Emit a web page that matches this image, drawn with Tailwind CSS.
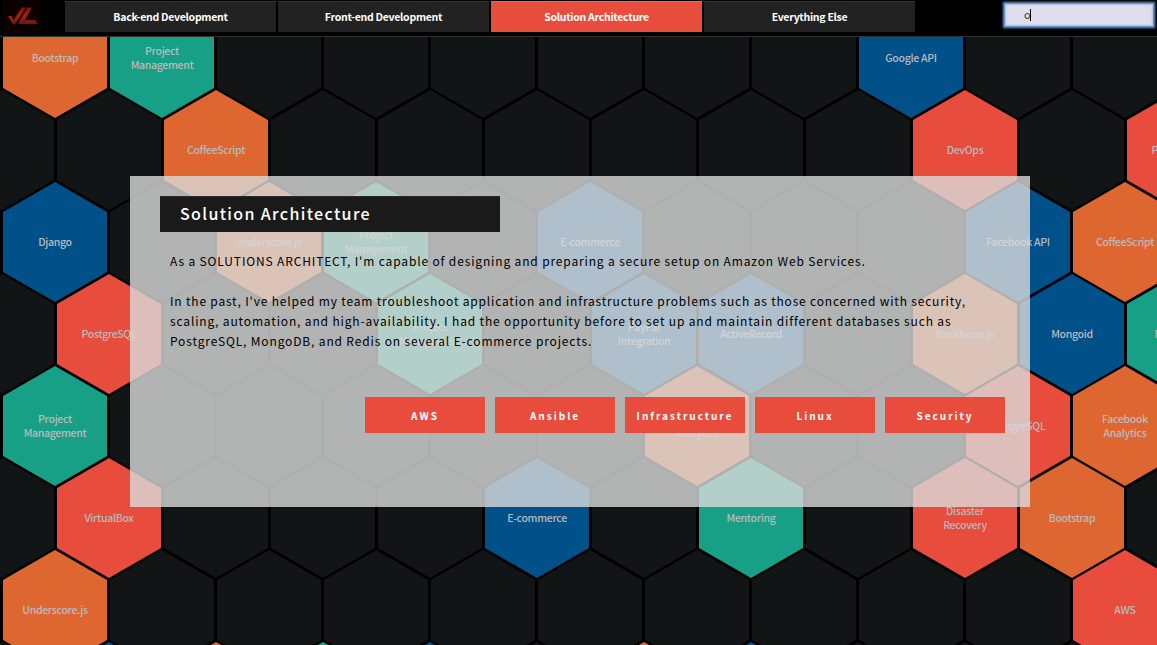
<!DOCTYPE html>
<html lang="en">
<head>
    <meta charset="UTF-8">
    <meta name="viewport" content="width=device-width, initial-scale=1.0">
    <title>Solution Architecture</title>
    <script src="https://cdn.jsdelivr.net/npm/@tailwindcss/browser@4"></script>
</head>
<body class="flex h-screen flex-col overflow-hidden bg-black font-['Noto_Sans_CJK_SC','Noto_Sans',sans-serif]">

    <!-- Top bar -->
    <header class="relative z-10 flex h-[37px] shrink-0 items-start border-b border-[#333] bg-black">
        <div class="ml-[3px] h-[34px] w-[62px]">
            <svg class="h-[34px] w-[38px]" viewBox="0 0 38 34">
                <defs>
                    <linearGradient id="logoRed" x1="0" y1="0" x2="0" y2="1">
                        <stop offset="0" stop-color="#7c1008"/>
                        <stop offset="0.5" stop-color="#b01c08"/>
                        <stop offset="1" stop-color="#651a10"/>
                    </linearGradient>
                </defs>
                <rect width="38" height="34" fill="#0b0101"/>
                <path fill="url(#logoRed)" d="M5 16h3.5l2.2 4L18.5 7.5H23L12.2 24H9.5z"/>
                <path fill="url(#logoRed)" d="M24.5 7.5H29L21.8 20h10.4l2.8 4H15z"/>
            </svg>
        </div>
        <nav class="mt-px flex gap-[2px] text-center text-[10.5px] leading-[30px] font-bold tracking-[-0.28px] text-white">
            <a class="h-[31px] w-[211px] border-t border-[#333] bg-[#222]">Back-end Development</a>
            <a class="h-[31px] w-[211px] border-t border-[#333] bg-[#222]">Front-end Development</a>
            <a class="h-[31px] w-[211px] border-t border-[#ee6b5e] bg-[#e84c3d]">Solution Architecture</a>
            <a class="h-[31px] w-[211px] border-t border-[#333] bg-[#222]">Everything Else</a>
        </nav>
        <div class="mt-[4px] mr-[4px] ml-auto flex h-[22px] w-[148px] items-center bg-[#dfdeec] pb-px pl-[19px] text-[11px] text-[#333] shadow-[0_0_2px_2px_#6a9bd8,inset_0_0_2px_1px_#a9c3e6]">
            <span class="tracking-[-0.7px]">o</span><span class="h-[12px] w-px bg-black"></span>
        </div>
    </header>

    <!-- Honeycomb, filled in by the script below -->
    <main id="comb" class="-mt-[39px] min-h-0 flex-1 overflow-hidden pl-[3px]"></main>

    <!-- Selected topic -->
    <section class="absolute top-[176px] left-[130px] h-[331px] w-[900px] bg-[#dbdbdb]/80 px-[30px] pt-[20px]">
        <h1 class="h-[36px] w-[340px] border-t border-[#2a2a2a] bg-[#1a1a1a] pl-[20px] text-[16px] leading-[33px] font-medium tracking-[1.35px] text-white">Solution Architecture</h1>
        <div class="mt-[19px] ml-[10px] text-[12px] leading-[20px] tracking-[0.85px] whitespace-nowrap text-black">
            <p>As a SOLUTIONS ARCHITECT, I'm capable of designing and preparing a secure setup on Amazon Web Services.</p>
            <p class="mt-[20px]"><span class="tracking-[0.81px]">In the past, I've helped my team troubleshoot application and infrastructure problems such as those concerned with security,</span><br>scaling, automation, and high-availability. I had the opportunity before to set up and maintain different databases such as<br>PostgreSQL, MongoDB, and Redis on several E-commerce projects.</p>
        </div>
        <div class="mt-[46px] -mr-[5px] flex justify-end gap-[10px] text-center text-[10px] leading-[37px] font-bold tracking-[2px] text-white">
            <a class="h-[36px] w-[120px] bg-[#e84c3d]">AWS</a>
            <a class="h-[36px] w-[120px] bg-[#e84c3d]">Ansible</a>
            <a class="h-[36px] w-[120px] bg-[#e84c3d]">Infrastructure</a>
            <a class="h-[36px] w-[120px] bg-[#e84c3d]">Linux</a>
            <a class="h-[36px] w-[120px] bg-[#e84c3d]">Security</a>
        </div>
    </section>

    <script>
        const colors = {
            dark: 'bg-[#111516]',
            orange: 'bg-[#de6731]',
            green: 'bg-[#18a086]',
            blue: 'bg-[#00508a]',
            red: 'bg-[#e84c3d]'
        };

        // One object per row, keyed by column; everything else stays dark
        const rows = [
            { 0: ['orange', 'Bootstrap'], 1: ['green', 'Project Management'], 8: ['blue', 'Google API'] },
            { 2: ['orange', 'CoffeeScript'], 9: ['red', 'DevOps'], 11: ['red', 'PostgreSQL'] },
            { 0: ['blue', 'Django'], 2: ['orange', 'Underscore.js'], 3: ['green', 'Project Management'], 5: ['blue', 'E-commerce'], 9: ['blue', 'Facebook API'], 10: ['orange', 'CoffeeScript'] },
            { 1: ['red', 'PostgreSQL'], 4: ['green', 'Project Management'], 6: ['blue', 'PayPal Integration'], 7: ['blue', 'ActiveRecord'], 9: ['orange', 'Backbone.js'], 10: ['blue', 'Mongoid'], 11: ['green', 'Mentoring'] },
            { 0: ['green', 'Project Management'], 6: ['orange', 'Facebook Analytics'], 9: ['red', 'PostgreSQL'], 10: ['orange', 'Facebook Analytics'] },
            { 1: ['red', 'VirtualBox'], 5: ['blue', 'E-commerce'], 7: ['green', 'Mentoring'], 9: ['red', 'Disaster Recovery'], 10: ['orange', 'Bootstrap'] },
            { 0: ['orange', 'Underscore.js'], 10: ['red', 'AWS'] },
            { 1: ['blue', ''], 2: ['orange', ''], 3: ['green', ''], 4: ['blue', ''], 6: ['orange', ''], 7: ['blue', ''] }
        ];

        const comb = document.getElementById('comb');
        rows.forEach((row, i) => {
            const line = document.createElement('div');
            line.className = 'flex gap-[3px] -mb-[28px]' + (i % 2 ? ' -ml-[53px]' : '');
            for (let c = 0; c < 12; c++) {
                const [color, label] = row[c] || ['dark', ''];
                const hex = document.createElement('div');
                hex.className = 'flex h-[120px] w-[104px] shrink-0 items-center justify-center px-[18px] text-center text-[10.5px] leading-[14px] font-medium tracking-[-0.3px] text-[#bbb] [clip-path:polygon(50%_0,100%_25%,100%_75%,50%_100%,0_75%,0_25%)] ' + colors[color];
                hex.textContent = label;
                line.appendChild(hex);
            }
            comb.appendChild(line);
        });
    </script>
</body>
</html>
